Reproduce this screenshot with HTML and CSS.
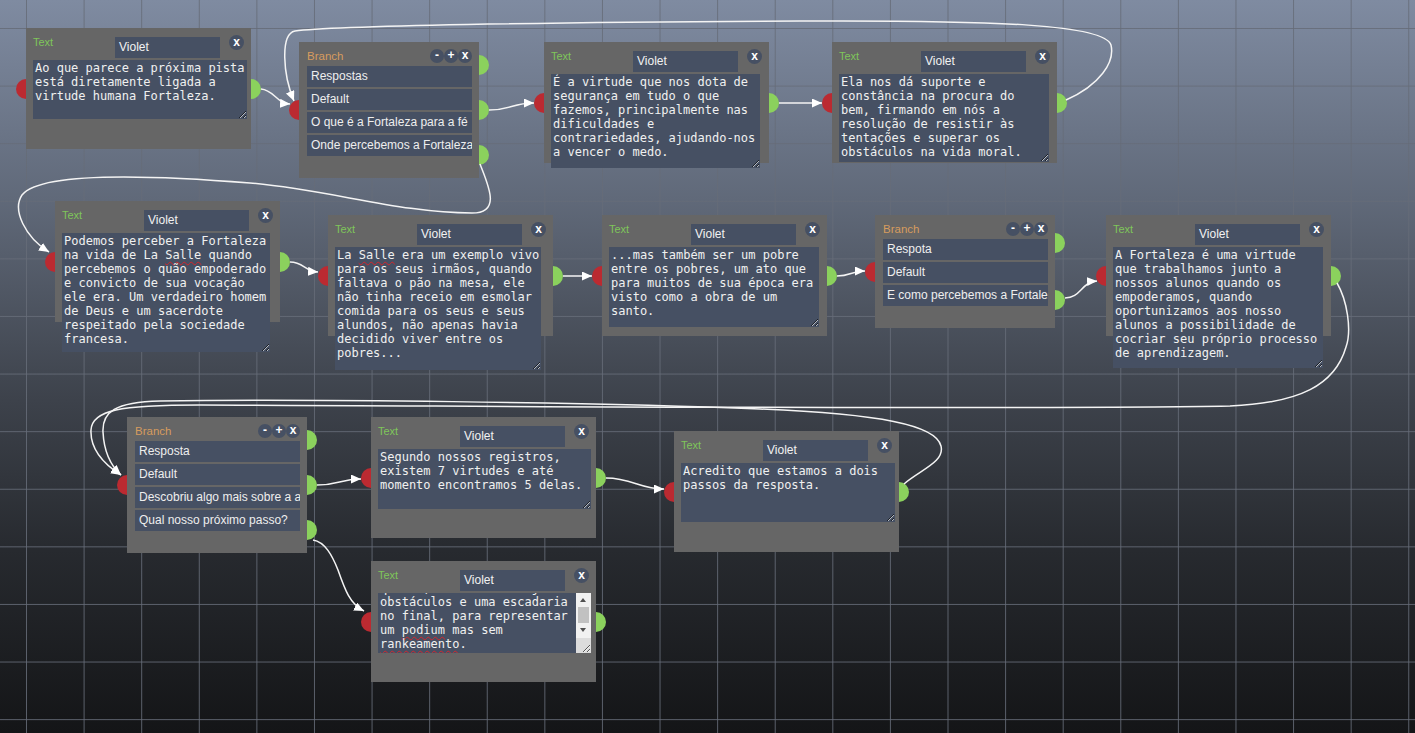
FILE: index.html
```html
<!DOCTYPE html>
<html lang="pt">
<head>
<meta charset="utf-8">
<title>Dialogue graph</title>
<link rel="stylesheet" href="styles.css">
</head>
<body>
<div class="canvas">
  <svg class="edges" width="1415" height="733" viewBox="0 0 1415 733">
    <defs>
      <marker id="arrow" markerUnits="userSpaceOnUse" markerWidth="11" markerHeight="10" refX="10" refY="4.5" orient="auto">
        <path d="M0,0 L10,4.5 L0,9 z" fill="#ffffff"/>
      </marker>
    </defs>
    <path class="edge" marker-end="url(#arrow)" d="M 261,89 C 274,90 276,103 290,104"/>
    <path class="edge" marker-end="url(#arrow)" d="M 1066,100 C 1100,85 1115,62 1111,45 C 1105,25 1000,20 800,21 C 550,22 330,26 295,31 C 280,34 283,75 294,101"/>
    <path class="edge" marker-end="url(#arrow)" d="M 489,110 C 511,110 512,103 534,103"/>
    <path class="edge" marker-end="url(#arrow)" d="M 480,164 C 488,185 502,213 472,213 C 400,213 330,190 250,183 C 150,175 40,172 22,195 C 12,210 25,237 49,252"/>
    <path class="edge" marker-end="url(#arrow)" d="M 779,103 L 822,103"/>
    <path class="edge" marker-end="url(#arrow)" d="M 290,262 C 304,262 304,271 318,272"/>
    <path class="edge" marker-end="url(#arrow)" d="M 563,276 L 592,276"/>
    <path class="edge" marker-end="url(#arrow)" d="M 837,276 C 851,276 851,271 865,271"/>
    <path class="edge" marker-end="url(#arrow)" d="M 1065,298 C 1081,298 1081,282 1097,281"/>
    <path class="edge" marker-end="url(#arrow)" d="M 1337,283 C 1347,300 1352,330 1346,347 C 1335,385 1300,403 1230,406 C 1000,410 500,406 200,405 C 120,405 92,410 91,430 C 90,450 104,464 121,475"/>
    <path class="edge" marker-end="url(#arrow)" d="M 904,484 C 920,470 945,462 941,446 C 936,425 880,414 760,409 C 600,402 300,399 160,401 C 115,402 102,412 103,432 C 104,452 110,465 121,475"/>
    <path class="edge" marker-end="url(#arrow)" d="M 317,485 C 339,485 340,479 361,479"/>
    <path class="edge" marker-end="url(#arrow)" d="M 313,540 C 325,542 332,555 338,570 C 345,590 350,604 364,611"/>
    <path class="edge" marker-end="url(#arrow)" d="M 606,478 C 632,478 640,489 664,489"/>
  </svg>

  <!-- A -->
  <div class="node text" style="left:26px;top:28px">
    <span class="port in"></span>
    <div class="outs"><span class="port out"></span></div>
    <div class="head"><span class="kind">Text</span><div class="name">Violet</div><span class="btn close">x</span></div>
    <div class="body" style="width:214px;height:59px">Ao que parece a próxima pista
está diretamente ligada a
virtude humana Fortaleza.</div>
  </div>

  <!-- B -->
  <div class="node branch" style="left:299px;top:42px">
    <span class="port in"></span>
    <div class="outs"><span class="port out"></span><span class="port out"></span><span class="port out"></span></div>
    <div class="head"><span class="kind">Branch</span><div class="tools"><span class="btn">-</span><span class="btn">+</span><span class="btn">x</span></div></div>
    <div class="rows">
      <div class="row">Respostas</div>
      <div class="row">Default</div>
      <div class="row">O que é a Fortaleza para a fé</div>
      <div class="row">Onde percebemos a Fortaleza</div>
    </div>
  </div>

  <!-- C -->
  <div class="node text" style="left:544px;top:42px">
    <span class="port in"></span>
    <div class="outs"><span class="port out"></span></div>
    <div class="head"><span class="kind">Text</span><div class="name">Violet</div><span class="btn close">x</span></div>
    <div class="body" style="width:209px;height:94px">É a virtude que nos dota de
segurança em tudo o que
fazemos, principalmente nas
dificuldades e
contrariedades, ajudando-nos
a vencer o medo.</div>
  </div>

  <!-- D -->
  <div class="node text" style="left:832px;top:42px">
    <span class="port in"></span>
    <div class="outs"><span class="port out"></span></div>
    <div class="head"><span class="kind">Text</span><div class="name">Violet</div><span class="btn close">x</span></div>
    <div class="body" style="width:210px;height:88px">Ela nos dá suporte e
constância na procura do
bem, firmando em nós a
resolução de resistir às
tentações e superar os
obstáculos na vida moral.</div>
  </div>

  <!-- E -->
  <div class="node text" style="left:55px;top:201px">
    <span class="port in"></span>
    <div class="outs"><span class="port out"></span></div>
    <div class="head"><span class="kind">Text</span><div class="name">Violet</div><span class="btn close">x</span></div>
    <div class="body" style="width:208px;height:119px">Podemos perceber a Fortaleza
na vida de La <span class="typo">Salle</span> quando
percebemos o quão empoderado
e convicto de sua vocação
ele era. Um verdadeiro homem
de Deus e um sacerdote
respeitado pela sociedade
francesa.</div>
  </div>

  <!-- F -->
  <div class="node text" style="left:328px;top:215px">
    <span class="port in"></span>
    <div class="outs"><span class="port out"></span></div>
    <div class="head"><span class="kind">Text</span><div class="name">Violet</div><span class="btn close">x</span></div>
    <div class="body" style="width:206px;height:123px">La <span class="typo">Salle</span> era um exemplo vivo
para os seus irmãos, quando
faltava o pão na mesa, ele
não tinha receio em esmolar
comida para os seus e seus
alundos, não apenas havia
decidido viver entre os
pobres...</div>
  </div>

  <!-- G -->
  <div class="node text" style="left:602px;top:215px">
    <span class="port in"></span>
    <div class="outs"><span class="port out"></span></div>
    <div class="head"><span class="kind">Text</span><div class="name">Violet</div><span class="btn close">x</span></div>
    <div class="body" style="width:210px;height:80px">...mas também ser um pobre
entre os pobres, um ato que
para muitos de sua época era
visto como a obra de um
santo.</div>
  </div>

  <!-- H -->
  <div class="node branch" style="left:875px;top:215px">
    <span class="port in"></span>
    <div class="outs"><span class="port out"></span><span class="port out"></span></div>
    <div class="head"><span class="kind">Branch</span><div class="tools"><span class="btn">-</span><span class="btn">+</span><span class="btn">x</span></div></div>
    <div class="rows">
      <div class="row">Respota</div>
      <div class="row">Default</div>
      <div class="row">E como percebemos a Fortaleza</div>
    </div>
  </div>

  <!-- I -->
  <div class="node text" style="left:1106px;top:215px">
    <span class="port in"></span>
    <div class="outs"><span class="port out"></span></div>
    <div class="head"><span class="kind">Text</span><div class="name">Violet</div><span class="btn close">x</span></div>
    <div class="body" style="width:210px;height:121px">A Fortaleza é uma virtude
que trabalhamos junto a
nossos alunos quando os
empoderamos, quando
oportunizamos aos nosso
alunos a possibilidade de
cocriar seu próprio processo
de aprendizagem.</div>
  </div>

  <!-- J -->
  <div class="node branch" style="left:127px;top:417px">
    <span class="port in"></span>
    <div class="outs"><span class="port out"></span><span class="port out"></span><span class="port out"></span></div>
    <div class="head"><span class="kind">Branch</span><div class="tools"><span class="btn">-</span><span class="btn">+</span><span class="btn">x</span></div></div>
    <div class="rows">
      <div class="row">Resposta</div>
      <div class="row">Default</div>
      <div class="row">Descobriu algo mais sobre a aventura?</div>
      <div class="row">Qual nosso próximo passo?</div>
    </div>
  </div>

  <!-- K -->
  <div class="node text" style="left:371px;top:417px">
    <span class="port in"></span>
    <div class="outs"><span class="port out"></span></div>
    <div class="head"><span class="kind">Text</span><div class="name">Violet</div><span class="btn close">x</span></div>
    <div class="body" style="width:213px;height:60px">Segundo nossos registros,
existem 7 virtudes e até
momento encontramos 5 delas.</div>
  </div>

  <!-- L -->
  <div class="node text" style="left:674px;top:431px">
    <span class="port in"></span>
    <div class="outs"><span class="port out"></span></div>
    <div class="head"><span class="kind">Text</span><div class="name">Violet</div><span class="btn close">x</span></div>
    <div class="body" style="width:214px;height:59px">Acredito que estamos a dois
passos da resposta.</div>
  </div>

  <!-- M -->
  <div class="node text" style="left:371px;top:561px">
    <span class="port in"></span>
    <div class="outs"><span class="port out"></span></div>
    <div class="head"><span class="kind">Text</span><div class="name">Violet</div><span class="btn close">x</span></div>
    <div class="body scroll" style="width:213px;height:60px">
      <div class="scroll-text"><div class="scrolled">Montamos uma atividade na
quadra, com trilha e já com
obstáculos e uma escadaria
no final, para representar
um <span class="typo">podium</span> mas sem
<span class="typo">rankeamento</span>.</div></div>
      <div class="sbar"><span class="sb-btn up"></span><span class="sb-track"><span class="sb-thumb"></span></span><span class="sb-btn down"></span><span class="sb-corner"></span></div>
    </div>
  </div>
</div>
</body>
</html>
```

FILE: styles.css
```css
html, body {
  margin: 0;
  padding: 0;
  width: 100%;
  height: 100%;
  overflow: hidden;
  background: #131416;
}

body {
  font-family: "Liberation Sans", Arial, sans-serif;
}

.canvas {
  position: relative;
  width: 1415px;
  height: 733px;
  overflow: hidden;
  isolation: isolate;
  background-color: #3c4149;
  background-image:
    linear-gradient(to right, rgba(102, 108, 120, 0.85) 1px, transparent 1px),
    linear-gradient(to bottom, rgba(102, 108, 120, 0.85) 1px, transparent 1px),
    linear-gradient(to bottom, #7f8ba1 0px, #606979 200px, #3d424b 400px, #272a2f 550px, #141517 733px);
  background-size: 57.6px 57.6px, 57.6px 57.6px, 100% 100%;
  background-position: 26px 0, 0 28px, 0 0;
}

.edges {
  position: absolute;
  left: 0;
  top: 0;
}

.edge {
  fill: none;
  stroke: #f4f4f4;
  stroke-width: 1.5;
}

/* ---------- nodes ---------- */
.node {
  position: absolute;
  box-sizing: border-box;
  background: #666666;
}

.node.text {
  width: 225px;
  height: 121px;
  padding: 0 7px;
}

.node.branch {
  width: 180px;
  padding: 0 7px 22px 8px;
}

.head {
  display: flex;
  align-items: flex-start;
  height: 32px;
}

.branch .head {
  height: 24px;
}

.kind {
  font-size: 11px;
  line-height: 14px;
  margin-top: 7px;
  color: #7fc55a;
}

.text .kind {
  width: 82px;
  flex: none;
}

.branch .kind {
  font-size: 11.5px;
  color: #d69c5e;
}

.name {
  margin-top: 9px;
  width: 105px;
  height: 21px;
  flex: none;
  box-sizing: border-box;
  padding: 0 4px;
  background: #465063;
  color: #f2f2f2;
  font-size: 12px;
  line-height: 21px;
}

.btn {
  display: block;
  width: 14px;
  height: 14px;
  border-radius: 50%;
  background: #465063;
  color: #ffffff;
  font-weight: bold;
  font-size: 12px;
  line-height: 13px;
  text-align: center;
}

.btn.close {
  width: 15px;
  height: 15px;
  line-height: 14px;
  margin-left: auto;
  margin-top: 7px;
}

.tools {
  display: flex;
  margin-left: auto;
  margin-top: 7px;
}

.rows {
  display: flex;
  flex-direction: column;
  gap: 2px;
}

.row {
  height: 21px;
  box-sizing: border-box;
  padding: 0 4px;
  background: #465063;
  color: #eeeeee;
  font-size: 12px;
  line-height: 21px;
  white-space: nowrap;
  overflow: hidden;
}

.body {
  box-sizing: border-box;
  padding: 1px 2px;
  background: #465063;
  color: #f0f0f0;
  font-family: "DejaVu Sans Mono", "Liberation Mono", monospace;
  font-size: 12px;
  line-height: 14px;
  white-space: pre;
  overflow: hidden;
  resize: both;
}

/* scrolled text area with a classic scrollbar */
.body.scroll {
  display: flex;
  padding: 0;
}

.scroll-text {
  flex: 1;
  min-width: 0;
  padding: 1px 0 0 2px;
  overflow: hidden;
}

.scrolled {
  margin-top: -27px;
}

.sbar {
  flex: none;
  width: 15px;
  display: flex;
  flex-direction: column;
  background: #f1f1f1;
}

.sb-btn {
  position: relative;
  display: block;
  height: 14px;
}

.sb-btn.down {
  height: 15px;
}

.sb-btn.up::after,
.sb-btn.down::after {
  content: "";
  position: absolute;
  left: 4px;
  border-left: 3.5px solid transparent;
  border-right: 3.5px solid transparent;
}

.sb-btn.up::after {
  top: 5px;
  border-bottom: 4px solid #505050;
}

.sb-btn.down::after {
  top: 5px;
  border-top: 4px solid #505050;
}

.sb-track {
  flex: 1;
  display: flex;
  padding: 0 2px;
}

.sb-thumb {
  flex: 1;
  background: #c1c1c1;
}

.sb-corner {
  display: block;
  height: 15px;
  background: #dcdcdc;
}

.typo {
  text-decoration: underline wavy #d3262c;
  text-decoration-thickness: 1px;
  text-underline-offset: 2px;
  text-decoration-skip-ink: none;
}

/* ---------- ports ---------- */
.port {
  display: block;
  width: 20px;
  height: 20px;
  border-radius: 50%;
  z-index: -1;
}

.port.in {
  position: absolute;
  left: -10px;
  top: calc(50% - 10px);
  background: #bb2a31;
}

.outs {
  position: absolute;
  top: 0;
  bottom: 0;
  right: -10px;
  width: 20px;
  display: flex;
  flex-direction: column;
  justify-content: space-around;
}

.port.out {
  position: relative;
  background: #8bd15d;
}
```
